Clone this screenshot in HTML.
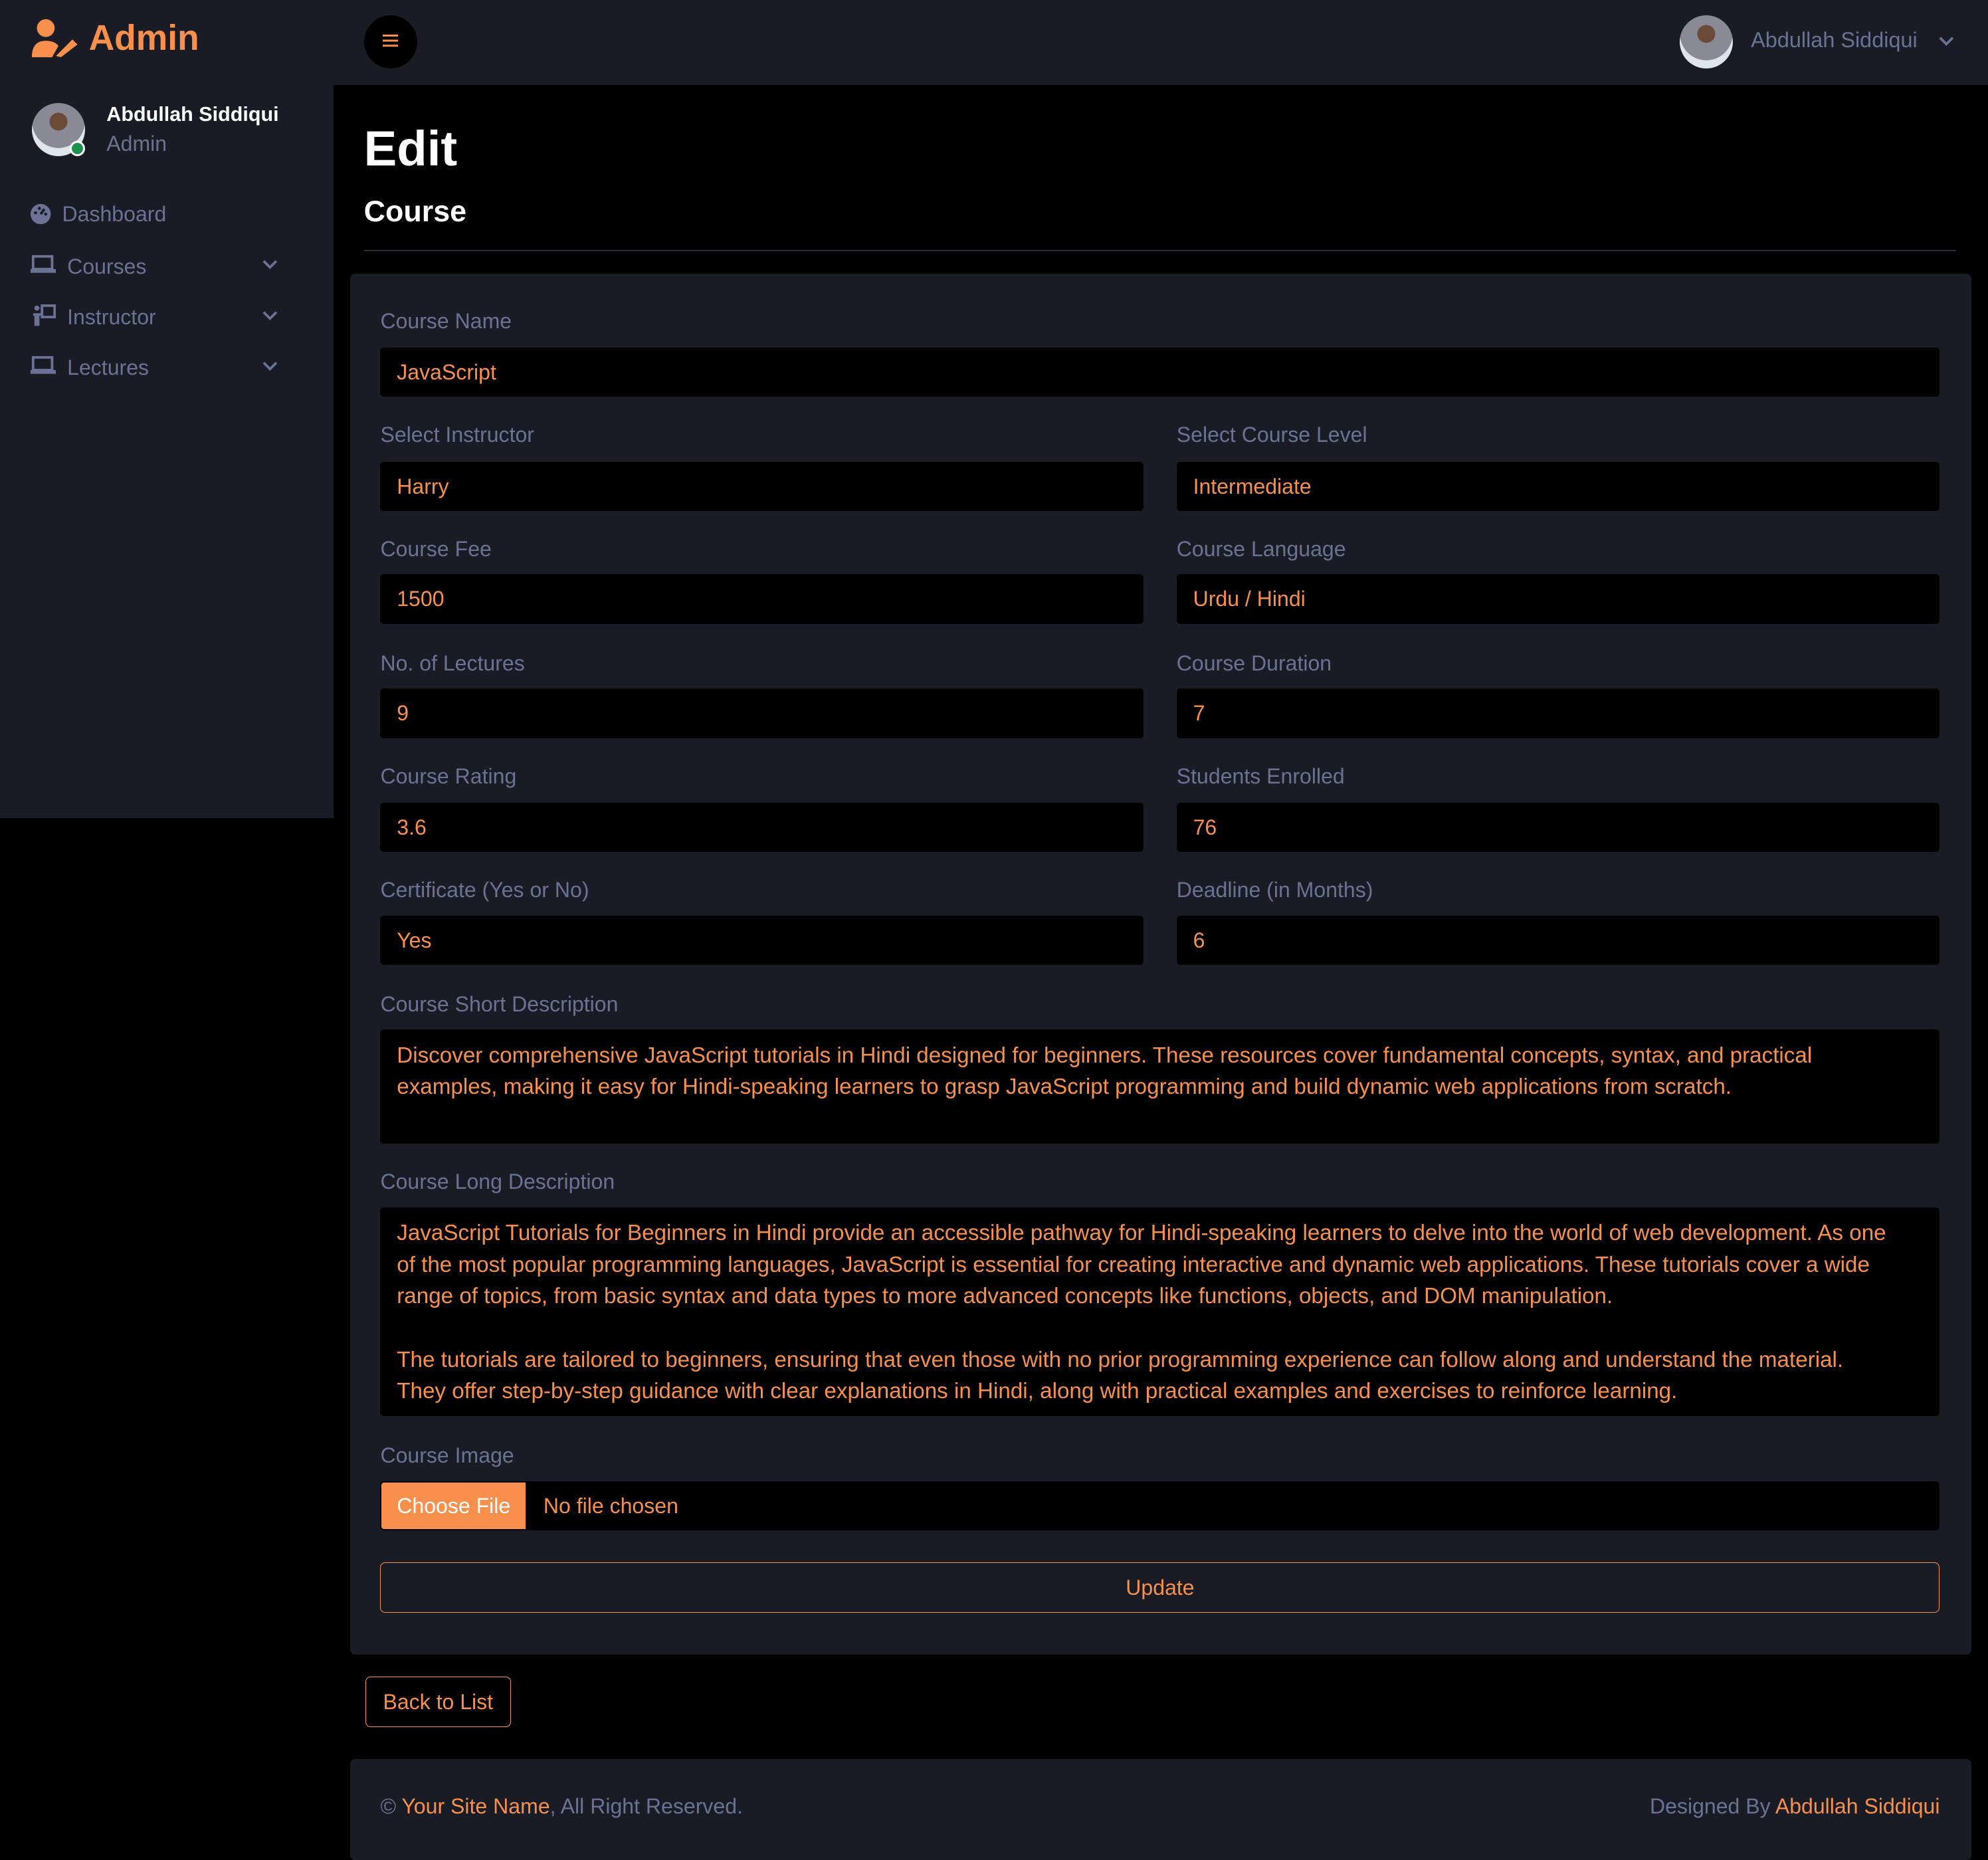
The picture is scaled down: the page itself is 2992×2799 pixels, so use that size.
<!DOCTYPE html>
<html><head><meta charset="utf-8"><style>
html,body{margin:0;padding:0;background:#000;}
body{zoom:1.90816;width:1568px;height:1462px;position:relative;overflow:hidden;font-family:"Liberation Sans",sans-serif;}
.a{position:absolute;}
.top{left:0;top:0;width:1568px;height:67px;background:#191c24;}
.side{left:0;top:67px;width:263px;height:578px;background:#191c24;}
.gray{color:#6c7293;}
.or{color:#f7904d;}
.nav{left:24px;font-size:16.8px;color:#6c7293;line-height:20px;}
.chev{left:206px;width:14px;height:10px;}
.card{left:276px;top:216px;width:1279px;height:1089px;background:#191c24;border-radius:4px;}
.lab{font-size:16.8px;color:#6c7293;line-height:20px;}
.inp{background:#000;border-radius:3px;height:39px;color:#f7904d;font-size:16.8px;line-height:39px;padding-left:13px;box-sizing:border-box;}
.L{left:300px;width:602px;}
.R{left:928px;width:602px;}
.F{left:300px;width:1230px;}
.ta{background:#000;border-radius:3px;color:#f7904d;font-size:17.4px;line-height:25px;padding:8px 13px;box-sizing:border-box;white-space:nowrap;}
</style></head><body>
<div class="a top"></div>
<div class="a side"></div>
<svg class="a" style="left:24px;top:14px" width="40" height="32" viewBox="0 0 40 32">
<circle cx="12" cy="8" r="7" fill="#f7904d"/>
<path d="M1 31 Q1 18 12 18 Q19 18 22 22 L17 31 Z" fill="#f7904d"/>
<path d="M20 30 L33 17 L37 21 L24 31 Z" fill="#f7904d"/>
</svg>
<div class="a or" style="left:70px;top:14px;font-size:28px;font-weight:bold;">Admin</div>
<div class="a" style="left:287px;top:12px;width:42px;height:42px;border-radius:50%;background:#000;"></div>
<div class="a" style="left:302px;top:27px;width:12px;height:2px;background:#f7904d;box-shadow:0 4px 0 #f7904d,0 8px 0 #f7904d;"></div>
<div class="a" style="left:1325px;top:12px;width:42px;height:42px;border-radius:50%;background:radial-gradient(circle at 50% 35%,#6b4a3a 0 20%,#8a8a96 21% 60%,#dfe6ea 61%);"></div>
<div class="a gray" style="left:1381px;top:22px;font-size:17px;">Abdullah Siddiqui</div>
<svg class="a chev" style="left:1528px;top:28px" viewBox="0 0 14 10"><path d="M2 2 L7 7 L12 2" stroke="#6c7293" stroke-width="2" fill="none"/></svg>
<div class="a" style="left:25px;top:81px;width:42px;height:42px;border-radius:50%;background:radial-gradient(circle at 50% 35%,#6b4a3a 0 20%,#8a8a96 21% 60%,#dfe6ea 61%);"></div>
<div class="a" style="left:55px;top:111px;width:9px;height:9px;border-radius:50%;background:#1f8f4e;border:2px solid #fff;"></div>
<div class="a" style="left:84px;top:81px;font-size:16px;font-weight:bold;color:#fff;">Abdullah Siddiqui</div>
<div class="a gray" style="left:84px;top:104px;font-size:16.8px;">Admin</div>
<svg class="a" style="left:23px;top:160px" width="18" height="18" viewBox="0 0 18 18"><circle cx="9" cy="9" r="8" fill="#6c7293"/><path d="M9 9 L12 5" stroke="#191c24" stroke-width="2"/><circle cx="5" cy="8" r="1.2" fill="#191c24"/><circle cx="8" cy="4.5" r="1.2" fill="#191c24"/><circle cx="13" cy="9" r="1.2" fill="#191c24"/></svg>
<div class="a nav" style="left:49px;top:159px">Dashboard</div>
<svg class="a" style="left:24px;top:200px" width="20" height="16" viewBox="0 0 20 16"><rect x="2" y="2" width="15" height="10" fill="none" stroke="#6c7293" stroke-width="2"/><rect x="0" y="12" width="20" height="3" fill="#6c7293"/></svg>
<div class="a nav" style="left:53px;top:200px">Courses</div>
<svg class="a" style="left:24px;top:240px" width="20" height="18" viewBox="0 0 20 18"><circle cx="5" cy="3" r="2" fill="#6c7293"/><path d="M2 7 H10 V9 H7 V17 H3 V9 H2Z" fill="#6c7293"/><rect x="9" y="1" width="10" height="9" fill="none" stroke="#6c7293" stroke-width="2"/></svg>
<div class="a nav" style="left:53px;top:240px">Instructor</div>
<svg class="a" style="left:24px;top:280px" width="20" height="16" viewBox="0 0 20 16"><rect x="2" y="2" width="15" height="10" fill="none" stroke="#6c7293" stroke-width="2"/><rect x="0" y="12" width="20" height="3" fill="#6c7293"/></svg>
<div class="a nav" style="left:53px;top:280px">Lectures</div>
<svg class="a chev" style="top:204px" viewBox="0 0 14 10"><path d="M2 2 L7 7 L12 2" stroke="#6c7293" stroke-width="2" fill="none"/></svg>
<svg class="a chev" style="top:244px" viewBox="0 0 14 10"><path d="M2 2 L7 7 L12 2" stroke="#6c7293" stroke-width="2" fill="none"/></svg>
<svg class="a chev" style="top:284px" viewBox="0 0 14 10"><path d="M2 2 L7 7 L12 2" stroke="#6c7293" stroke-width="2" fill="none"/></svg>
<div class="a" style="left:287px;top:95px;font-size:39px;font-weight:bold;color:#fff;">Edit</div>
<div class="a" style="left:287px;top:153px;font-size:23.5px;font-weight:bold;color:#fff;">Course</div>
<div class="a" style="left:287px;top:197px;width:1256px;height:1px;background:#2c2e33;"></div>
<div class="a card"></div>
<div class="a lab" style="left:300px;top:243px">Course Name</div>
<div class="a inp F" style="top:274px">JavaScript</div>
<div class="a lab" style="left:300px;top:333px">Select Instructor</div>
<div class="a lab" style="left:928px;top:333px">Select Course Level</div>
<div class="a inp L" style="top:364px">Harry</div>
<div class="a inp R" style="top:364px">Intermediate</div>
<div class="a lab" style="left:300px;top:423px">Course Fee</div>
<div class="a lab" style="left:928px;top:423px">Course Language</div>
<div class="a inp L" style="top:453px">1500</div>
<div class="a inp R" style="top:453px">Urdu / Hindi</div>
<div class="a lab" style="left:300px;top:513px">No. of Lectures</div>
<div class="a lab" style="left:928px;top:513px">Course Duration</div>
<div class="a inp L" style="top:543px">9</div>
<div class="a inp R" style="top:543px">7</div>
<div class="a lab" style="left:300px;top:602px">Course Rating</div>
<div class="a lab" style="left:928px;top:602px">Students Enrolled</div>
<div class="a inp L" style="top:633px">3.6</div>
<div class="a inp R" style="top:633px">76</div>
<div class="a lab" style="left:300px;top:692px">Certificate (Yes or No)</div>
<div class="a lab" style="left:928px;top:692px">Deadline (in Months)</div>
<div class="a inp L" style="top:722px">Yes</div>
<div class="a inp R" style="top:722px">6</div>
<div class="a lab" style="left:300px;top:782px">Course Short Description</div>
<div class="a ta F" style="top:812px;height:90px;">Discover comprehensive JavaScript tutorials in Hindi designed for beginners. These resources cover fundamental concepts, syntax, and practical<br>examples, making it easy for Hindi-speaking learners to grasp JavaScript programming and build dynamic web applications from scratch.</div>
<div class="a lab" style="left:300px;top:922px">Course Long Description</div>
<div class="a ta F" style="top:952px;height:165px;">JavaScript Tutorials for Beginners in Hindi provide an accessible pathway for Hindi-speaking learners to delve into the world of web development. As one<br>of the most popular programming languages, JavaScript is essential for creating interactive and dynamic web applications. These tutorials cover a wide<br>range of topics, from basic syntax and data types to more advanced concepts like functions, objects, and DOM manipulation.<br><br>The tutorials are tailored to beginners, ensuring that even those with no prior programming experience can follow along and understand the material.<br>They offer step-by-step guidance with clear explanations in Hindi, along with practical examples and exercises to reinforce learning.</div>
<div class="a lab" style="left:300px;top:1138px">Course Image</div>
<div class="a inp F" style="top:1168px;padding-left:0;">
<span style="display:inline-block;background:#f7904d;color:#fff;height:37px;line-height:37px;margin:1px;padding:0 12px;border-radius:2px 0 0 2px;">Choose File</span><span style="margin-left:13px;">No file chosen</span></div>
<div class="a" style="left:300px;top:1232px;width:1230px;height:40px;box-sizing:border-box;border:1px solid #f7904d;border-radius:4px;color:#f7904d;font-size:16.8px;text-align:center;line-height:39px;">Update</div>
<div class="a" style="left:288px;top:1322px;width:115px;height:40px;box-sizing:border-box;border:1px solid #f7904d;border-radius:4px;color:#f7904d;font-size:16.8px;text-align:center;line-height:39px;">Back to List</div>
<div class="a" style="left:276px;top:1387px;width:1279px;height:80px;background:#191c24;border-radius:4px;"></div>
<div class="a gray" style="left:300px;top:1415px;font-size:16.8px;">© <span class="or">Your Site Name</span>, All Right Reserved.</div>
<div class="a gray" style="right:38px;top:1415px;font-size:16.8px;">Designed By <span class="or">Abdullah Siddiqui</span></div>
</body></html>
